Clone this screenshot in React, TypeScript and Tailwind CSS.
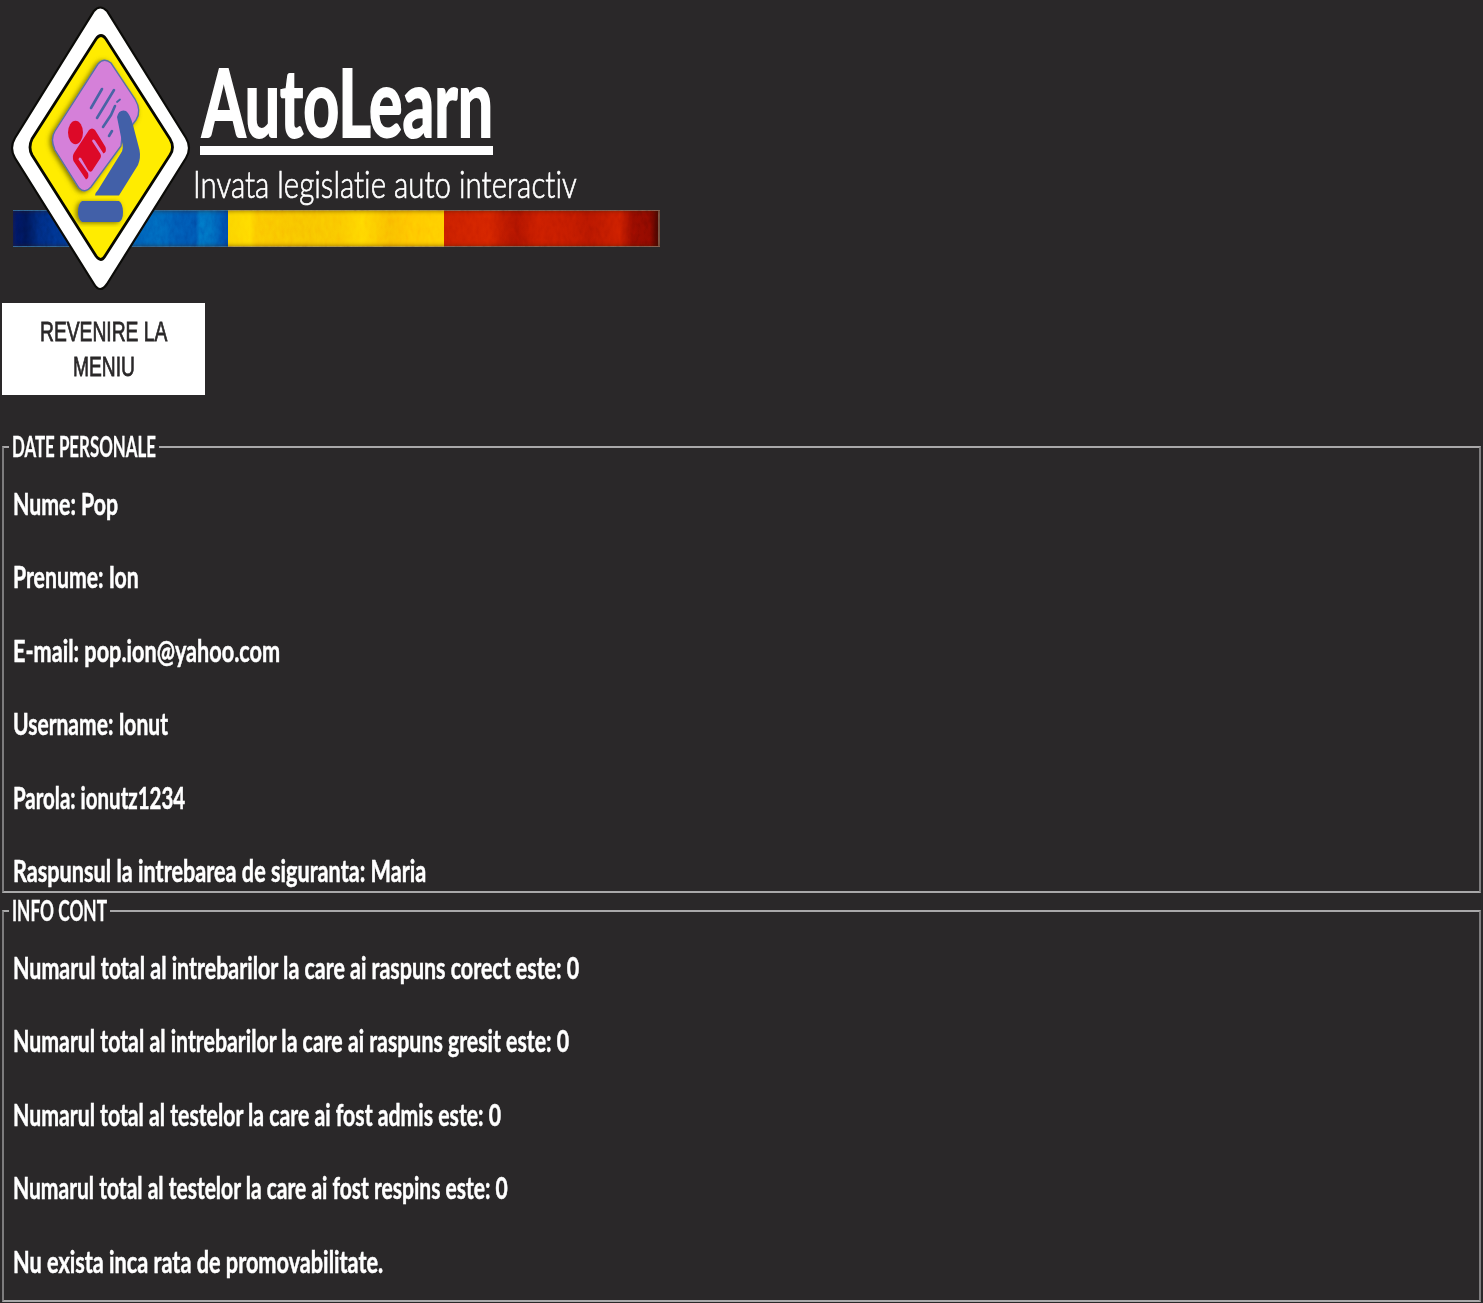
import { useLayoutEffect, useRef, useState } from "react";

type FitProps = { text: string; width: number; className: string };

/** A single line of text condensed horizontally to the given width. */
function Fit({ text, width, className }: FitProps) {
  const ref = useRef<HTMLSpanElement>(null);
  const [scale, setScale] = useState(1);
  useLayoutEffect(() => {
    if (ref.current) setScale(width / ref.current.offsetWidth);
  }, [text, width]);
  return (
    <span className="block overflow-visible whitespace-nowrap" style={{ width }}>
      <span
        ref={ref}
        className={"inline-block origin-left whitespace-nowrap [font-variant-ligatures:none] " + className}
        style={{ transform: `scaleX(${scale})` }}
      >
        {text}
      </span>
    </span>
  );
}

const personal: [string, number][] = [
  ["Nume: Pop", 105],
  ["Prenume: Ion", 126],
  ["E-mail: pop.ion@yahoo.com", 267],
  ["Username: Ionut", 155],
  ["Parola: ionutz1234", 172],
  ["Raspunsul la intrebarea de siguranta: Maria", 413],
];

const account: [string, number][] = [
  ["Numarul total al intrebarilor la care ai raspuns corect este: 0", 566],
  ["Numarul total al intrebarilor la care ai raspuns gresit este: 0", 556],
  ["Numarul total al testelor la care ai fost admis este: 0", 488],
  ["Numarul total al testelor la care ai fost respins este: 0", 495],
  ["Nu exista inca rata de promovabilitate.", 370],
];

function Rows({ rows }: { rows: [string, number][] }) {
  return (
    <div className="flex flex-col">
      {rows.map(([text, width]) => (
        <div key={text} className="h-[73.45px]">
          <Fit
            text={text}
            width={width}
            className="text-[30px] leading-[36px] font-bold [-webkit-text-stroke:0.5px]"
          />
        </div>
      ))}
    </div>
  );
}

function Sign() {
  return (
    <svg className="absolute left-0 top-0" width="200" height="300" viewBox="0 0 200 300">
      <defs>
        <filter id="soft" x="-20%" y="-20%" width="140%" height="140%">
          <feDropShadow dx="-2" dy="1" stdDeviation="2.5" floodColor="#5b5200" floodOpacity="0.8" />
        </filter>
      </defs>
      <path
        d="M94 11Q100 4 107 11L186 138Q192 148 186 158L107 284Q100 294 94 284L15 158Q9 148 15 138Z"
        fill="#fff"
        stroke="#0b0b08"
        strokeWidth="2.2"
      />
      <path
        d="M96 39Q101 32 106 39L170 139Q175 147.500 170 155L105 256Q101 263 96 256L32 155Q28 147.500 32 139Z"
        fill="#ffec00"
        stroke="#080800"
        strokeWidth="2.8"
      />
      <g filter="url(#soft)">
        <path
          d="M98 64Q104 57 111 63L135 99Q142 111 136 120L133 124L122 137L121 146L91 187Q85 194 79 188L55 150Q50 139 55 131Z"
          fill="#d580d9"
          stroke="#5870a8"
          strokeWidth="1.4"
        />
      </g>
      <g stroke="#4864a5" strokeWidth="2.6" strokeLinecap="round" fill="none">
        <path d="M102 89L91 108M114 90L97 118M115 106L111 115L103 127M112 131L109 136" />
        <path d="M120 99.500L117 102" strokeWidth="1.8" />
      </g>
      <g fill="#dd0928">
        <ellipse cx="75.500" cy="132.500" rx="7.500" ry="11.800" />
        <path d="M89 130Q92 127 95 130L105.500 147Q107 152 103.500 153.500L95 140.500Q93 138.500 92 141L100.500 154Q101.500 156 100.500 158L92 171Q90 173 88 170L81 158Q79 156.500 78.500 159.500L88 173Q89.500 178 86 179.500L73.500 161Q72 156 74 153Z" />
      </g>
      <path
        fill="#4260a8"
        d="M117 117Q119 109 126 111Q130 114 133 125L139.500 150Q141 158 138 165L119 195.500H95Q95 193 98 190L121 153Q124 149 122 142Z"
      />
      <g filter="url(#soft)">
        <path fill="#4260a8" d="M82 201H119Q123 204 123 212Q123 220 119 222H82Q78 219 78 212Q78 204 82 201Z" />
      </g>
    </svg>
  );
}

/** Blue, yellow and red band with a brushed grain. */
function FlagBand() {
  return (
    <div className="relative ml-[13px] flex h-[37px] w-[647px]">
      <div className="w-[215px] border-y border-[#2b5b86] bg-[linear-gradient(90deg,#001765_0%,#001450_6%,#002877_12%,#003a96_30%,#0057b0_55%,#0062b8_68%,#0054ae_76%,#0050aa_85%,#006cc0_87%,#0066ba_92%,#0042a0_100%)]" />
      <div className="w-[216px] border-y border-[#a88a3e] bg-[linear-gradient(90deg,#fbd000_0%,#ffd800_10%,#fbc400_13%,#f7c000_35%,#fac400_52%,#ffd400_62%,#f9b800_75%,#ffc200_84%,#ffcc00_100%)]" />
      <div className="flex-1 border-y border-r-2 border-[#755448] bg-[linear-gradient(90deg,#c51d00_0%,#d12200_21%,#ba1900_27%,#a81200_34%,#c61c00_44%,#bd1900_60%,#b01500_68%,#c81d00_82%,#8e0b00_88%,#850900_96%,#450500_100%)]" />
      <svg className="absolute inset-0 opacity-25 mix-blend-overlay" width="647" height="37">
        <filter id="grain" x="0" y="0" width="100%" height="100%">
          <feTurbulence type="fractalNoise" baseFrequency="0.25 0.12" numOctaves="3" seed="4" />
          <feColorMatrix type="saturate" values="0" />
          <feComponentTransfer>
            <feFuncA type="linear" slope="0" intercept="1" />
          </feComponentTransfer>
        </filter>
        <rect width="647" height="37" filter="url(#grain)" />
      </svg>
      <div className="absolute inset-x-0 inset-y-px shadow-[inset_0_0_4px_rgba(60,30,0,0.55)]" />
    </div>
  );
}

export default function App() {
  return (
    <div className="h-[1303px] w-full overflow-hidden bg-[#2a2829] font-[Lato,sans-serif] text-white">
      <header className="relative flex h-[303px] flex-col pt-[58px]">
        <div className="ml-[200px] h-[97px] w-[293px] border-b-[9px] border-white pl-[2px]">
          <Fit
            text="AutoLearn"
            width={291}
            className="text-[93px] leading-[86px] font-bold [-webkit-text-stroke:2px]"
          />
        </div>
        <div className="ml-[193px] h-[55px] pt-[5px]">
          <Fit
            text="Invata legislatie auto interactiv"
            width={384}
            className="text-[38px] leading-[46px] font-light [-webkit-text-stroke:0.7px]"
          />
        </div>
        <FlagBand />
        <Sign />
      </header>
      <button className="ml-[2px] flex h-[92px] w-[203px] flex-col items-center bg-white pt-[11px] font-['Liberation_Sans',Arial,sans-serif] text-[#2a2829]">
        <Fit text="REVENIRE LA" width={127} className="text-[28.500px] leading-[35px] [-webkit-text-stroke:0.8px]" />
        <Fit text="MENIU" width={62} className="text-[28.500px] leading-[35px] [-webkit-text-stroke:0.8px]" />
      </button>
      <fieldset className="mt-[36px] mr-[2px] ml-[2px] h-[462px] border-2 border-x-[#7d7c7d] border-y-[#a9a8a9] px-[8px]">
        <legend className="-ml-[3px] h-[32px] px-[3px]">
          <Fit
            text="DATE PERSONALE"
            width={144}
            className="text-[28px] leading-[31px] font-bold [-webkit-text-stroke:0.3px]"
          />
        </legend>
        <div className="pt-[22px] pl-px">
          <Rows rows={personal} />
        </div>
      </fieldset>
      <fieldset className="mt-[2px] mr-[2px] ml-[2px] h-[407px] border-2 border-x-[#7d7c7d] border-y-[#a9a8a9] px-[8px]">
        <legend className="-ml-[3px] h-[32px] px-[3px]">
          <Fit
            text="INFO CONT"
            width={95}
            className="text-[28px] leading-[31px] font-bold [-webkit-text-stroke:0.3px]"
          />
        </legend>
        <div className="pt-[22px] pl-px">
          <Rows rows={account} />
        </div>
      </fieldset>
    </div>
  );
}
